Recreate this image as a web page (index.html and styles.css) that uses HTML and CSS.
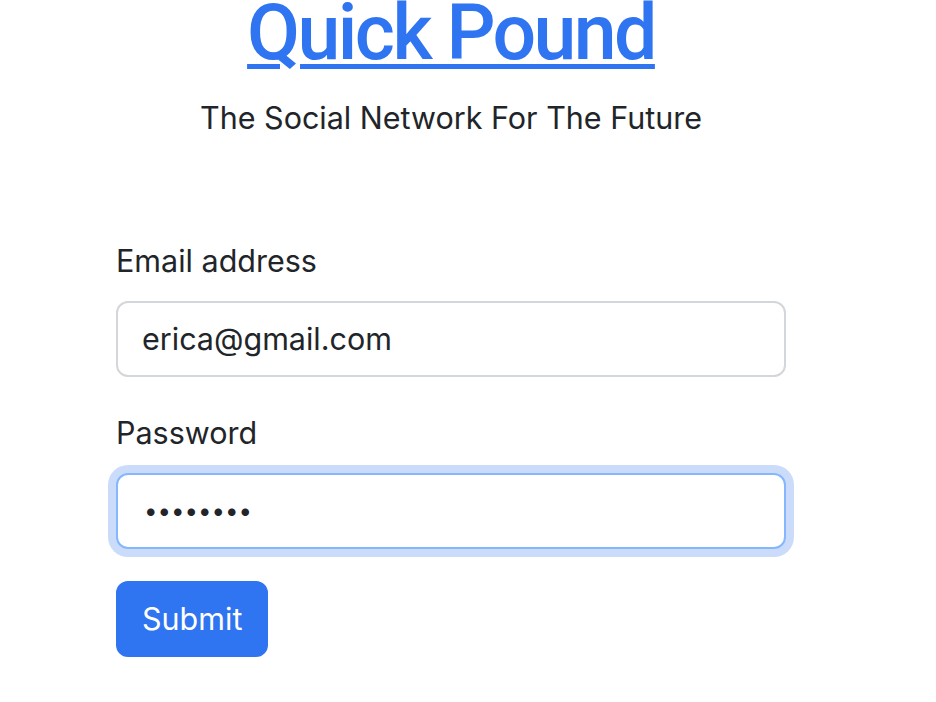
FILE: index.html
```html
<!DOCTYPE html>
<html lang="en">
<head>
<meta charset="utf-8">
<title>Quick Pound</title>
<link rel="stylesheet" href="styles.css">
</head>
<body>
<main class="page">
  <header class="hero">
    <h1 class="brand"><a href="#" class="brand-link">Quick Pound</a></h1>
    <p class="tagline">The Social Network For The Future</p>
  </header>
  <form class="login-form">
    <div class="field">
      <label class="field-label" for="email">Email address</label>
      <input class="field-input" id="email" type="email" value="erica@gmail.com">
    </div>
    <div class="field">
      <label class="field-label" for="password">Password</label>
      <input class="field-input field-password is-focused" id="password" type="password" value="12345678">
    </div>
    <button type="submit" class="btn-submit">Submit</button>
  </form>
</main>
</body>
</html>
```

FILE: styles.css
```css
* { box-sizing: border-box; }
html, body { margin: 0; padding: 0; background: #fff; }
body {
  font-family: Inter, "Noto Sans", "Liberation Sans", sans-serif;
  color: #212529;
  font-size: 30.5px;
  line-height: 1.5;
}
.page {
  width: 670px;
  margin-left: 116px;
}
.hero {
  text-align: center;
}
.brand {
  margin: 0 0 29px;
  font-family: Roboto, Inter, sans-serif;
  font-size: 77px;
  font-weight: 500;
  line-height: 66px;
  letter-spacing: -2.6px;
}
.brand-link {
  color: #2f74f0;
  text-decoration: underline;
  text-decoration-thickness: 5px;
  text-underline-offset: 5px;
}
.tagline {
  margin: 0;
  font-size: 30.5px;
  line-height: 1.5;
}
.login-form {
  margin-top: 96px;
}
.field { margin-bottom: 32px; }
.field-label {
  display: block;
  margin-bottom: 16px;
  line-height: 48px;
}
.field-input {
  display: block;
  width: 100%;
  height: 76px;
  padding: 12px 24px;
  font: inherit;
  font-size: 30.5px;
  color: #212529;
  background: #fff;
  border: 2px solid #d3d6da;
  border-radius: 12px;
  outline: none;
}
.field-password {
  font-size: 24px;
  padding-left: 26px;
}
.field-input.is-focused {
  border-color: #86b7fe;
  box-shadow: 0 0 0 8px rgba(47, 116, 240, 0.25);
}
.btn-submit {
  display: inline-block;
  height: 76px;
  padding: 12px 24px;
  font: inherit;
  font-size: 30.5px;
  color: #fff;
  background: #2f74f0;
  border: 2px solid #2f74f0;
  border-radius: 12px;
}
```
